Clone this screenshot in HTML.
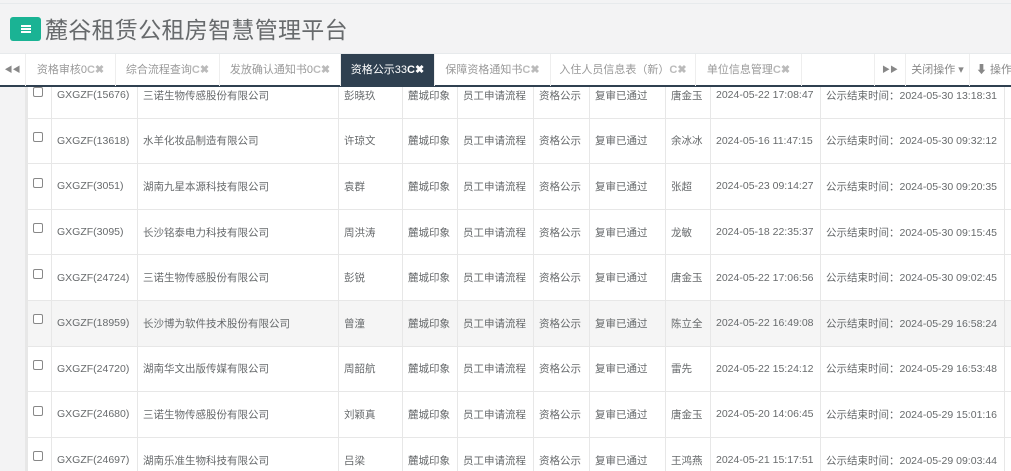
<!DOCTYPE html>
<html><head><meta charset="utf-8"><style>
*{margin:0;padding:0;box-sizing:border-box}
html,body{width:1011px;height:471px;overflow:hidden}
body{background:#f3f3f4;font-family:"Liberation Sans","Noto Sans CJK SC",sans-serif;color:#676a6c;position:relative}
.hdr{position:absolute;left:0;top:3px;width:1011px;height:50px;background:#f3f3f4;border-top:1px solid #e7eaec}
.btn{position:absolute;left:10px;top:13px;width:31px;height:24px;background:#1ab394;border-radius:3px}
.btn i{position:absolute;left:11px;width:10px;height:2px;background:#fff}
.title{position:absolute;left:45px;top:7px;font-size:23px;color:#676a6c;letter-spacing:0.3px}
.tabs{position:absolute;z-index:5;left:0;top:53px;width:1011px;height:34px;background:#fff;border-top:1px solid #e7eaec;border-bottom:2px solid #2f4050;font-size:11px;color:#999}
.t{position:absolute;top:0;height:32px;line-height:32px;border-right:1px solid #eee;text-align:center;white-space:nowrap}
.t b{color:#bbb}
.act{background:#2f4050;color:#fff}
.act b{color:#fff}
.side{position:absolute;left:0;top:87px;width:10px;height:384px;background:#f3f3f4}
.side2{position:absolute;left:10px;top:87px;width:17px;height:384px;background:#f3f3f4;border-right:2px solid #e7e7e7}
table{position:absolute;left:27px;top:72px;width:998px;border-collapse:collapse;table-layout:fixed;background:#fff;font-size:10.5px;color:#676a6c}
td{border:1px solid #e7e7e7;height:45.6px;padding:0 5px;white-space:nowrap;overflow:hidden;vertical-align:middle}
tr.g td{background:#f5f5f5}
.cb{display:inline-block;width:10px;height:10px;border:1px solid #888;border-radius:2px;vertical-align:middle;margin-top:-8px;background:#fff}
</style></head><body>
<div class="hdr"><div class="btn"><i style="top:8px"></i><i style="top:11px"></i><i style="top:14px"></i></div>
<div class="title">麓谷租赁公租房智慧管理平台</div></div>
<div class="tabs">
<div class="t" style="left:0;width:26px;color:#888;font-size:8px">◀◀</div>
<div class="t" style="left:26px;width:90px">资格审核0<b>C✖</b></div>
<div class="t" style="left:116px;width:104px">综合流程查询<b>C✖</b></div>
<div class="t" style="left:220px;width:121px">发放确认通知书0<b>C✖</b></div>
<div class="t act" style="left:341px;width:94px">资格公示33<b>C✖</b></div>
<div class="t" style="left:435px;width:116px">保障资格通知书<b>C✖</b></div>
<div class="t" style="left:551px;width:145px">入住人员信息表（新）<b>C✖</b></div>
<div class="t" style="left:696px;width:106px">单位信息管理<b>C✖</b></div>
<div class="t" style="left:874px;width:32px;border-left:1px solid #eee;color:#888;font-size:8px">▶▶</div>
<div class="t" style="left:906px;width:64px;color:#888">关闭操作 ▾</div>
<div class="t" style="left:970px;width:50px;color:#888;text-align:left;padding-left:6px">⬇ 操作</div>
</div>
<div class="side"></div><div class="side2"></div>
<table>
<colgroup><col style="width:24px"><col style="width:86px"><col style="width:201px"><col style="width:64px"><col style="width:55px"><col style="width:76px"><col style="width:56px"><col style="width:76px"><col style="width:45px"><col style="width:110px"><col style="width:184px"><col style="width:21px"></colgroup>
<tr><td><span class="cb"></span></td><td>GXGZF(15676)</td><td>三诺生物传感股份有限公司</td><td>彭晓玖</td><td>麓城印象</td><td>员工申请流程</td><td>资格公示</td><td>复审已通过</td><td>唐金玉</td><td>2024-05-22 17:08:47</td><td>公示结束时间：2024-05-30 13:18:31</td><td></td></tr>
<tr><td><span class="cb"></span></td><td>GXGZF(13618)</td><td>水羊化妆品制造有限公司</td><td>许琼文</td><td>麓城印象</td><td>员工申请流程</td><td>资格公示</td><td>复审已通过</td><td>余冰冰</td><td>2024-05-16 11:47:15</td><td>公示结束时间：2024-05-30 09:32:12</td><td></td></tr>
<tr><td><span class="cb"></span></td><td>GXGZF(3051)</td><td>湖南九星本源科技有限公司</td><td>袁群</td><td>麓城印象</td><td>员工申请流程</td><td>资格公示</td><td>复审已通过</td><td>张超</td><td>2024-05-23 09:14:27</td><td>公示结束时间：2024-05-30 09:20:35</td><td></td></tr>
<tr><td><span class="cb"></span></td><td>GXGZF(3095)</td><td>长沙铭泰电力科技有限公司</td><td>周洪涛</td><td>麓城印象</td><td>员工申请流程</td><td>资格公示</td><td>复审已通过</td><td>龙敏</td><td>2024-05-18 22:35:37</td><td>公示结束时间：2024-05-30 09:15:45</td><td></td></tr>
<tr><td><span class="cb"></span></td><td>GXGZF(24724)</td><td>三诺生物传感股份有限公司</td><td>彭锐</td><td>麓城印象</td><td>员工申请流程</td><td>资格公示</td><td>复审已通过</td><td>唐金玉</td><td>2024-05-22 17:06:56</td><td>公示结束时间：2024-05-30 09:02:45</td><td></td></tr>
<tr class="g"><td><span class="cb"></span></td><td>GXGZF(18959)</td><td>长沙博为软件技术股份有限公司</td><td>曾潼</td><td>麓城印象</td><td>员工申请流程</td><td>资格公示</td><td>复审已通过</td><td>陈立全</td><td>2024-05-22 16:49:08</td><td>公示结束时间：2024-05-29 16:58:24</td><td></td></tr>
<tr><td><span class="cb"></span></td><td>GXGZF(24720)</td><td>湖南华文出版传媒有限公司</td><td>周韶航</td><td>麓城印象</td><td>员工申请流程</td><td>资格公示</td><td>复审已通过</td><td>雷先</td><td>2024-05-22 15:24:12</td><td>公示结束时间：2024-05-29 16:53:48</td><td></td></tr>
<tr><td><span class="cb"></span></td><td>GXGZF(24680)</td><td>三诺生物传感股份有限公司</td><td>刘颖真</td><td>麓城印象</td><td>员工申请流程</td><td>资格公示</td><td>复审已通过</td><td>唐金玉</td><td>2024-05-20 14:06:45</td><td>公示结束时间：2024-05-29 15:01:16</td><td></td></tr>
<tr><td><span class="cb"></span></td><td>GXGZF(24697)</td><td>湖南乐准生物科技有限公司</td><td>吕梁</td><td>麓城印象</td><td>员工申请流程</td><td>资格公示</td><td>复审已通过</td><td>王鸿燕</td><td>2024-05-21 15:17:51</td><td>公示结束时间：2024-05-29 09:03:44</td><td></td></tr>
</table>
</body></html>
